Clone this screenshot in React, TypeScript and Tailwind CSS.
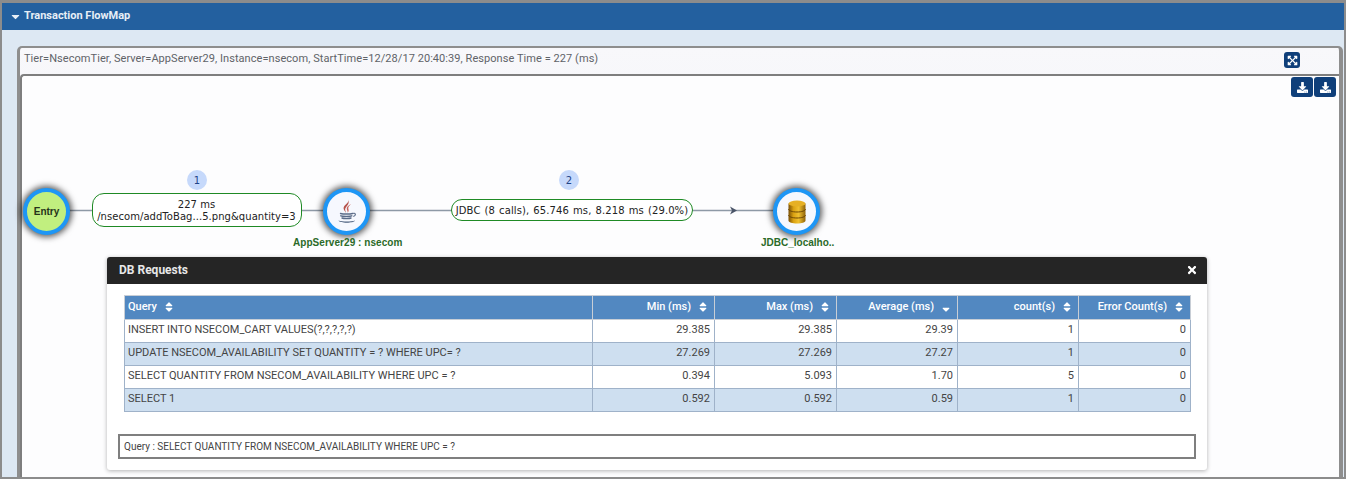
import React from "react";
import { FaCaretDown, FaDownload, FaExpandArrowsAlt, FaTimes, FaSort, FaSortDown } from "react-icons/fa";

const cols = [
  { name: "Query", sort: "both", w: "w-[468px]", right: false },
  { name: "Min (ms)", sort: "both", w: "w-[122px]", right: true },
  { name: "Max (ms)", sort: "both", w: "w-[122px]", right: true },
  { name: "Average (ms)", sort: "down", w: "w-[121px]", right: true },
  { name: "count(s)", sort: "both", w: "w-[121px]", right: true },
  { name: "Error Count(s)", sort: "both", w: "w-[112px]", right: true },
];

const rows = [
  ["INSERT INTO NSECOM_CART VALUES(?,?,?,?,?)", "29.385", "29.385", "29.39", "1", "0"],
  ["UPDATE NSECOM_AVAILABILITY SET QUANTITY = ? WHERE UPC= ?", "27.269", "27.269", "27.27", "1", "0"],
  ["SELECT QUANTITY FROM NSECOM_AVAILABILITY WHERE UPC = ?", "0.394", "5.093", "1.70", "5", "0"],
  ["SELECT 1", "0.592", "0.592", "0.59", "1", "0"],
];

function JavaIcon() {
  return (
    <svg width="20" height="26" viewBox="0 0 20 26" fill="none">
      <path d="M11 0.500c1.800 3.500-4.800 5.500-4.400 9 .2 1.600 1.500 2.800 2.300 4.500-.2-2-1.100-3-.6-4.400.8-2.500 5-4.500 2.700-9.100z" fill="#b5524b" />
      <path d="M14 5c-3 1.700-4.800 3-4.200 5.200.3 1.200 1.100 2.100.9 3.600 1.500-1.600.9-3 .6-4.200-.3-1.500 1.100-2.900 2.700-4.600z" fill="#c9655d" />
      <path d="M3.500 14.500c2.700.7 9.500.7 12 0M3.800 16.800c1.500.7 9.500.7 11 0M5 19c1.500.6 7.500.6 9 0" stroke="#5a6b88" strokeWidth="1.400" strokeLinecap="round" />
      <path d="M15.500 14.500c3-1.200 4.200 1.500 .8 3" stroke="#5a6b88" strokeWidth="1.100" />
      <path d="M1.500 21.500c3.500 1.400 13 1.400 16.500 0-1 2.900-15.500 2.900-16.500 0z" fill="#4a5f7e" />
    </svg>
  );
}

function DbIcon() {
  return (
    <svg width="18" height="24" viewBox="0 0 18 24">
      <defs>
        <linearGradient id="gold" x1="0" x2="1" y1="0" y2="0">
          <stop offset="0" stopColor="#7a4f06" />
          <stop offset="0.3" stopColor="#dba212" />
          <stop offset="0.6" stopColor="#f0c030" />
          <stop offset="1" stopColor="#8f6208" />
        </linearGradient>
      </defs>
      <path d="M0.500 3.500v17c0 1.800 3.800 3 8.500 3s8.500-1.200 8.500-3v-17z" fill="url(#gold)" />
      <ellipse cx="9" cy="3.500" rx="8.500" ry="3" fill="#e6b024" />
      <path d="M0.500 9c0 1.800 3.800 3 8.500 3s8.500-1.200 8.500-3M0.500 15c0 1.800 3.800 3 8.500 3s8.500-1.200 8.500-3" stroke="#6e4805" strokeWidth="1" fill="none" />
    </svg>
  );
}

function Node({ className, children }: { className: string; children: React.ReactNode }) {
  return (
    <div className={`absolute top-[112px] flex h-[47px] w-[47px] items-center justify-center rounded-full border-4 border-[#1e96f5] shadow-[0_0_6px_2px_rgba(0,0,0,0.65)] ${className}`}>
      {children}
    </div>
  );
}

function DlButton() {
  return (
    <div className="flex h-[20px] w-[22px] items-center justify-center rounded-[3px] bg-[#0f3f7a] text-white">
      <FaDownload size={11} />
    </div>
  );
}

export default function App() {
  return (
    <div className="flex h-[479px] w-full flex-col overflow-hidden border-2 border-t-[3px] border-[#8c8c8c] bg-[#dde8f3] font-['Roboto',sans-serif]">
      <div className="flex h-[27px] shrink-0 items-center gap-[2px] bg-[#23609f] pl-[7px] text-[11px] font-bold text-[#e6eef6]">
        <FaCaretDown size={13} />
        <span>Transaction FlowMap</span>
      </div>
      <div className="flex min-h-0 flex-1 flex-col pl-[15px] pr-px pt-[16px]">
        <div className="flex min-h-0 flex-1 flex-col rounded-t-[5px] border-l-[3px] border-r-[4px] border-t-2 border-[#8e8e8e] bg-gradient-to-b from-[#f8f8fb] to-[#ebecf1]">
          <div className="relative flex h-[26px] shrink-0 items-center pb-[4px] pl-[4px] text-[11px] text-[#5f6368]">
            <span className="tracking-[0.06px]">Tier=NsecomTier, Server=AppServer29, Instance=nsecom, StartTime=12/28/17 20:40:39, Response Time = 227 (ms)</span>
            <div className="absolute left-[1264px] top-[4px] flex h-[16px] w-[16px] items-center justify-center rounded-[3px] bg-[#0f3f7a] text-white">
              <FaExpandArrowsAlt size={11} />
            </div>
          </div>
          <div className="relative min-h-0 flex-1 rounded-tl-[4px] border-l-[2px] border-t-[2px] border-[#7e7e7e] bg-[#fdfdfe]">
            <div className="absolute left-[1269px] top-px flex gap-px">
              <DlButton />
              <DlButton />
            </div>

            <svg className="absolute left-0 top-0" width="900" height="200" fill="none">
              <line x1="40" y1="134.500" x2="760" y2="134.500" stroke="#8e99a6" strokeWidth="1.500" />
              <path d="M708 130.500l7 4-7 4 2-4z" fill="#4a5568" />
            </svg>

            <Node className="left-[1px] bg-[#c1ef7f]">
              <span className="font-['Liberation_Sans',sans-serif] text-[10px] font-bold text-[#26331a]">Entry</span>
            </Node>
            <Node className="left-[301px] bg-[#f6f8fe]"><JavaIcon /></Node>
            <Node className="left-[751px] bg-[#f6f8fe]"><DbIcon /></Node>

            <div className="absolute left-[70px] top-[117px] flex h-[34px] w-[210px] flex-col items-center justify-center rounded-[12px] border border-[#1f8a25] bg-white pr-[1px] pt-[1px] font-['DejaVu_Sans',sans-serif] text-[10px] leading-[12px] tracking-[0.05px] text-[#222]">
              <span>227 ms</span>
              <span>/nsecom/addToBag...5.png&amp;quantity=3</span>
            </div>
            <div className="absolute left-[429px] top-[123px] flex h-[22px] w-[242px] items-center justify-center rounded-[11px] border border-[#1f8a25] bg-white font-['DejaVu_Sans',sans-serif] text-[10px] tracking-[0.1px] [word-spacing:0.800px] text-[#222]">
              JDBC (8 calls), 65.746 ms, 8.218 ms (29.0%)
            </div>

            <div className="absolute left-[165px] top-[94px] flex h-[20px] w-[20px] items-center justify-center rounded-full bg-[#c6d9fb] font-['DejaVu_Sans',sans-serif] text-[10px] text-[#1f4488]">1</div>
            <div className="absolute left-[537px] top-[94px] flex h-[20px] w-[20px] items-center justify-center rounded-full bg-[#c6d9fb] font-['DejaVu_Sans',sans-serif] text-[10px] text-[#1f4488]">2</div>

            <div className="absolute left-[271px] top-[159px] font-['Liberation_Sans',sans-serif] text-[10px] font-bold tracking-[0.05px] text-[#2a6a28]">AppServer29 : nsecom</div>
            <div className="absolute left-[739px] top-[159px] font-['Liberation_Sans',sans-serif] text-[10px] font-bold text-[#2a6a28]">JDBC_localho..</div>

            <div className="absolute left-[85px] top-[181px] flex h-[213px] w-[1100px] flex-col rounded-[3px] bg-white shadow-[0_1px_4px_rgba(0,0,0,0.3)]">
              <div className="flex h-[27px] shrink-0 items-center justify-between rounded-t-[3px] bg-[#252525] pb-[1px] pl-[12px] pr-[9px] text-[12px] font-bold text-[#e8e8e8]">
                <span>DB Requests</span>
                <FaTimes size={12} className="text-white" />
              </div>
              <div className="pl-[17px] pt-[11px]">
                <table className="w-[1066px] table-fixed border-collapse text-[11px]">
                  <thead>
                    <tr className="h-[24px] bg-[#5288c1] text-white">
                      {cols.map((c) => (
                        <th key={c.name} className={`${c.w} border border-[#c8ced6] pb-[1px] pl-[3px] pr-[4px] font-medium ${c.right ? "text-right" : "text-left"}`}>
                          <span className="inline-flex items-center gap-[6px] pr-[1px] align-middle">
                            {c.name}
                            {c.sort === "both" ? <FaSort size={12} /> : <FaSortDown size={12} />}
                          </span>
                        </th>
                      ))}
                    </tr>
                  </thead>
                  <tbody>
                    {rows.map((r, i) => (
                      <tr key={i} className={`h-[23px] text-[#444] ${i % 2 ? "bg-[#cedff0]" : "bg-white"}`}>
                        {r.map((v, j) => (
                          <td key={j} className={`border border-[#9fb2c9] pb-[2px] pl-[3px] pr-[4px] ${j ? "text-right" : "text-left"}`}>{v}</td>
                        ))}
                      </tr>
                    ))}
                  </tbody>
                </table>
              </div>
              <div className="ml-[11px] mt-[22px] flex h-[25px] w-[1078px] items-center border-2 border-[#7f7f7f] pl-[4px] text-[10px] text-[#444]">
                Query : SELECT QUANTITY FROM NSECOM_AVAILABILITY WHERE UPC = ?
              </div>
            </div>
          </div>
        </div>
      </div>
    </div>
  );
}
